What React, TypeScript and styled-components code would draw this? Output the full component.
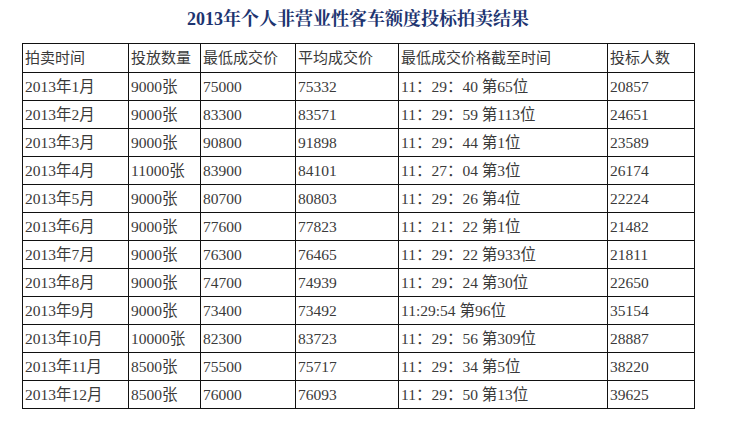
import styled, { createGlobalStyle } from "styled-components";

const GlobalStyle = createGlobalStyle`
  html, body {
    margin: 0;
    padding: 0;
    background: #fff;
  }
`;

const Page = styled.div`
  width: 672px;
  padding-left: 22px;
  font-family: "Liberation Serif", "Noto Sans CJK SC", serif;
`;

const Title = styled.h1`
  margin: 0;
  height: 43px;
  line-height: 38px;
  text-align: center;
  font-size: 18px;
  font-weight: bold;
  color: #1d3470;
  font-family: "Liberation Serif", "Noto Serif CJK SC", "Noto Sans CJK SC", serif;
`;

const Table = styled.table`
  width: 672px;
  border-collapse: collapse;
  table-layout: fixed;
`;

const Cell = styled.td<{ $head?: boolean }>`
  border: 1px solid #111;
  height: ${(p) => (p.$head ? 28 : 27)}px;
  padding: 0 0 0 2px;
  font-size: ${(p) => (p.$head ? 15 : 15.5)}px;
  line-height: 18px;
  color: #3a3a3a;
  white-space: nowrap;
  vertical-align: middle;
`;

const widths = [106, 72, 95, 103, 209, 87];
const head = ["拍卖时间", "投放数量", "最低成交价", "平均成交价", "最低成交价格截至时间", "投标人数"];

const rows: string[][] = [
  ["2013年1月", "9000张", "75000", "75332", "11：29：40 第65位", "20857"],
  ["2013年2月", "9000张", "83300", "83571", "11：29：59 第113位", "24651"],
  ["2013年3月", "9000张", "90800", "91898", "11：29：44 第1位", "23589"],
  ["2013年4月", "11000张", "83900", "84101", "11：27：04 第3位", "26174"],
  ["2013年5月", "9000张", "80700", "80803", "11：29：26 第4位", "22224"],
  ["2013年6月", "9000张", "77600", "77823", "11：21：22 第1位", "21482"],
  ["2013年7月", "9000张", "76300", "76465", "11：29：22 第933位", "21811"],
  ["2013年8月", "9000张", "74700", "74939", "11：29：24 第30位", "22650"],
  ["2013年9月", "9000张", "73400", "73492", "11:29:54 第96位", "35154"],
  ["2013年10月", "10000张", "82300", "83723", "11：29：56 第309位", "28887"],
  ["2013年11月", "8500张", "75500", "75717", "11：29：34 第5位", "38220"],
  ["2013年12月", "8500张", "76000", "76093", "11：29：50 第13位", "39625"],
];

export default function App() {
  return (
    <>
      <GlobalStyle />
      <Page>
        <Title>2013年个人非营业性客车额度投标拍卖结果</Title>
        <Table>
          <colgroup>
            {widths.map((w, i) => (
              <col key={i} style={{ width: w }} />
            ))}
          </colgroup>
          <tbody>
            <tr>
              {head.map((h) => (
                <Cell $head key={h}>{h}</Cell>
              ))}
            </tr>
            {rows.map((r) => (
              <tr key={r[0]}>
                {r.map((c, i) => (
                  <Cell key={i}>{c}</Cell>
                ))}
              </tr>
            ))}
          </tbody>
        </Table>
      </Page>
    </>
  );
}
